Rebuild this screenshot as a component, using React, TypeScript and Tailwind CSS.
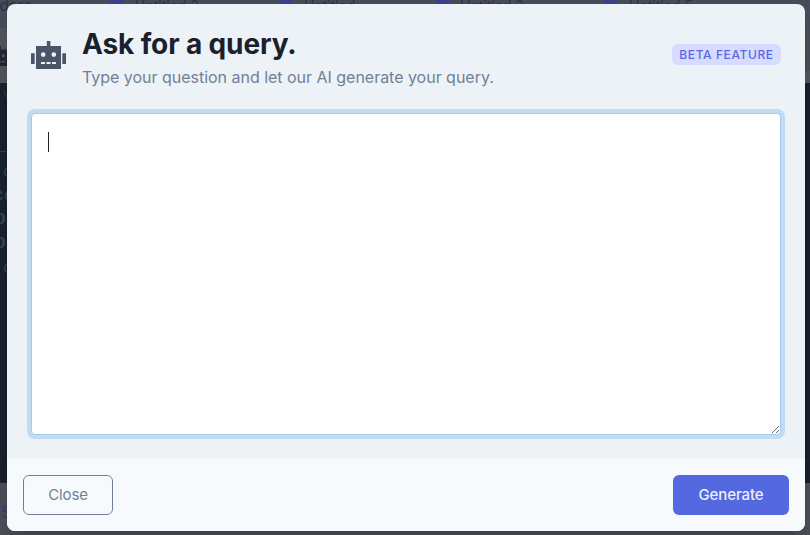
import React from "react";

const tabs = [
  { x: "left-[110px]", label: "Untitled 2" },
  { x: "left-[279px]", label: "Untitled" },
  { x: "left-[435px]", label: "Untitled 3" },
  { x: "left-[604px]", label: "Untitled 5" },
];

const code = [
  { t: "\\", c: "left-[2px] top-[89px] text-[#1d3a5c] text-base" },
  { t: "_", c: "-left-[6px] top-[135px] text-[#2b4450] text-xl font-bold" },
  { t: "c", c: "left-[3px] top-[163px] text-[#1d4a4a] text-base" },
  { t: "cc", c: "-left-[8px] top-[186px] text-[#2b4450] text-xl font-bold" },
  { t: "p", c: "-left-[6px] top-[209px] text-[#2b4450] text-xl font-bold" },
  { t: "p", c: "-left-[6px] top-[233px] text-[#2b4450] text-xl font-bold" },
  { t: "c", c: "left-[3px] top-[259px] text-[#1d4a4a] text-base" },
];

function Robot({ className }: { className: string }) {
  return (
    <svg viewBox="0 0 35 28" className={className} fill="currentColor">
      <path
        fillRule="evenodd"
        d="M15.8 0h3.6v5H30v23H5V5h10.800zM12.200 11.300a2.300 2.300 0 1 0 0 4.600a2.300 2.300 0 1 0 0-4.600M22.800 11.300a2.300 2.300 0 1 0 0 4.600a2.300 2.300 0 1 0 0-4.600M10 21v2h4v-2zM15.500 21v2h4v-2zM21 21v2h4v-2zM0 12.300h3.700v10.700H0zM31.300 12.300H35v10.700h-3.700z"
      />
    </svg>
  );
}

function Backdrop() {
  return (
    <div className="absolute inset-0 flex flex-col overflow-hidden">
      <div className="h-7 shrink-0 bg-[#464b59]" />
      <div className="h-[55px] shrink-0 bg-[#505359]" />
      <div className="h-[400px] shrink-0 bg-[#1a202c]" />
      <div className="grow bg-[#4b4e57]" />
      <span className="absolute -left-[17px] -top-[4px] text-[15px] leading-5 text-[#2d323e]">Orders</span>
      {tabs.map((t) => (
        <React.Fragment key={t.label}>
          <div className={`absolute top-0 h-6 w-3.5 bg-[#3b4188] ${t.x}`} />
          <span className={`absolute -top-[4px] ml-[25px] text-sm leading-5 text-[#2d323e] ${t.x}`}>{t.label}</span>
        </React.Fragment>
      ))}
      <Robot className="absolute -left-[13px] top-[46px] h-[20px] w-[25px] text-[#20252f]" />
      <div className="absolute right-0 top-[28px] h-[43px] w-[5px] bg-[#484c57]" />
      {code.map((l, i) => (
        <span key={i} className={`absolute font-['Liberation_Mono',monospace] leading-5 ${l.c}`}>
          {l.t}
        </span>
      ))}
      <span className="absolute left-[1px] top-[502px] text-base leading-5 text-[#353a6d]">5</span>
    </div>
  );
}

export default function App() {
  return (
    <div className="relative h-[535px] w-[810px] overflow-hidden pl-[7px] pt-1 font-['Inter',sans-serif]">
      <Backdrop />
      <div className="relative flex h-[527px] w-[798px] flex-col overflow-hidden rounded-lg bg-[#edf2f7] shadow-xl">
        <div className="flex h-[455px] flex-col px-6 pt-6">
          <header className="flex h-[61px] items-start">
            <Robot className="mt-[13px] h-7 w-[35px] shrink-0 text-[#4a5568]" />
            <div className="ml-4">
              <h1 className="text-[28px] leading-8 font-bold tracking-[-0.12px] text-[#1a202c]">Ask for a query.</h1>
              <p className="mt-[5px] text-base leading-6 tracking-[-0.02px] text-[#718096]">
                Type your question and let our AI generate your query.
              </p>
            </div>
            <span className="mt-4 ml-auto flex h-[21px] w-[109px] items-center justify-center rounded-md bg-[#d6dbff] text-xs font-medium tracking-[0.6px] text-[#5a67e8]">
              BETA FEATURE
            </span>
          </header>
          <textarea
            autoFocus
            className="mt-6 block h-[322px] w-[750px] shrink-0 resize rounded border border-[#a3cdf0] bg-white px-4 py-4 text-base leading-6 text-[#1a202c] caret-transparent shadow-[0_0_0_4px_#c3dbf0] outline-none"
          />
          <div className="relative -mt-[303px] ml-[17px] h-5 w-px shrink-0 bg-[#1a202c]" />
        </div>
        <footer className="flex h-[72px] items-center justify-between bg-[#f7fafc] px-4">
          <button className="h-10 w-[90px] rounded-md border border-[#718096] text-[15px] tracking-[-0.1px] text-[#718096]">Close</button>
          <button className="h-10 w-[116px] rounded-md bg-[#5468e0] text-[15px] font-medium tracking-[-0.1px] text-[#edf0ff]">Generate</button>
        </footer>
      </div>
    </div>
  );
}
